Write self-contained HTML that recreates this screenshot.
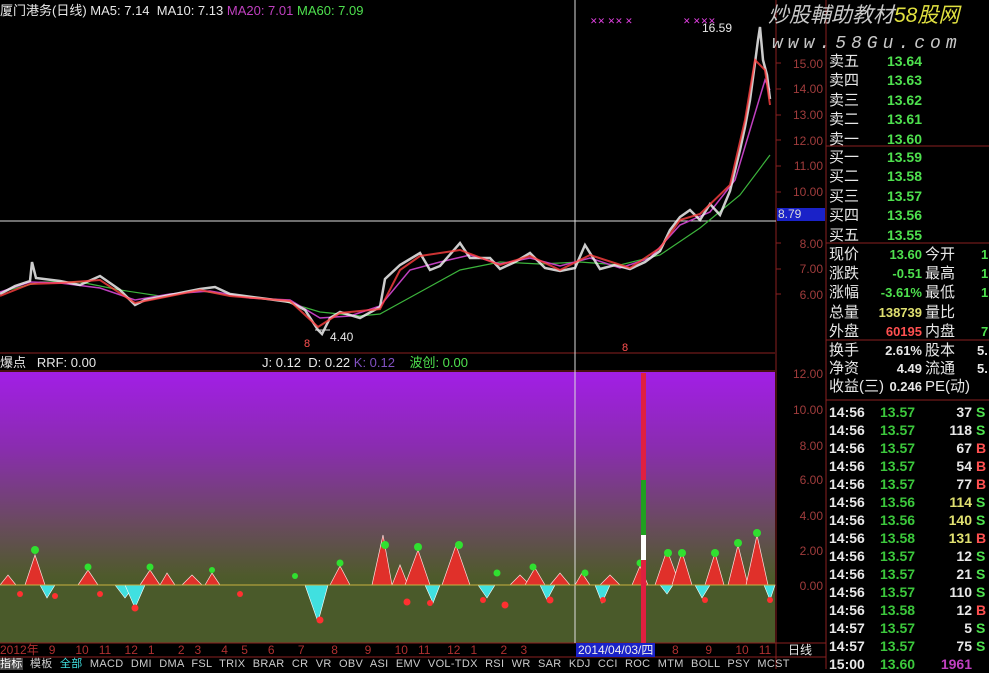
<!DOCTYPE html>
<html><head><meta charset="utf-8"><style>
body{margin:0;background:#000;width:989px;height:669px;overflow:hidden;position:relative;font-family:"Liberation Sans","Noto Sans CJK SC",sans-serif}
.t{position:absolute;white-space:nowrap;font-size:13px;line-height:15px}
.w{color:#e8e8e8}.g{color:#4ee04e}.r{color:#ff5050}.y{color:#e0e070}.m{color:#c040c0}
.ax{position:absolute;font-size:12px;color:#a03c3c;width:45px;text-align:right;left:778px}
</style></head><body>
<svg width="989" height="669" style="position:absolute;left:0;top:0">
<defs><linearGradient id="lg" x1="0" y1="0" x2="0" y2="1">
<stop offset="0" stop-color="#a21ee6"/><stop offset="0.35" stop-color="#8a2cb0"/><stop offset="0.7" stop-color="#6a4a60"/><stop offset="0.95" stop-color="#4f5a2c"/><stop offset="1" stop-color="#4a5a2a"/></linearGradient></defs>
<rect x="0" y="372" width="775" height="214" fill="url(#lg)"/>
<rect x="0" y="586" width="775" height="57" fill="#4a5a2a"/>
<line x1="0" y1="353" x2="775" y2="353" stroke="#8a2020"/>
<line x1="0" y1="371" x2="775" y2="371" stroke="#8a2020"/>
<line x1="776" y1="0" x2="776" y2="669" stroke="#8a2020"/>
<line x1="826" y1="0" x2="826" y2="669" stroke="#8a2020"/>
<line x1="826" y1="146" x2="989" y2="146" stroke="#8a2020"/>
<line x1="826" y1="243" x2="989" y2="243" stroke="#8a2020"/>
<line x1="826" y1="340" x2="989" y2="340" stroke="#8a2020"/>
<line x1="826" y1="400" x2="989" y2="400" stroke="#8a2020"/>
<line x1="0" y1="643" x2="826" y2="643" stroke="#8a2020"/>
<line x1="0" y1="657" x2="826" y2="657" stroke="#8a2020"/>
<g stroke="#8a2020"><line x1="776" y1="63" x2="781" y2="63"/><line x1="776" y1="89" x2="781" y2="89"/><line x1="776" y1="115" x2="781" y2="115"/><line x1="776" y1="140" x2="781" y2="140"/><line x1="776" y1="166" x2="781" y2="166"/><line x1="776" y1="192" x2="781" y2="192"/><line x1="776" y1="243" x2="781" y2="243"/><line x1="776" y1="269" x2="781" y2="269"/><line x1="776" y1="294" x2="781" y2="294"/></g>
<line x1="0" y1="221" x2="776" y2="221" stroke="#ddd"/>
<line x1="575" y1="0" x2="575" y2="643" stroke="#ddd"/>
<rect x="777" y="208" width="48" height="13" fill="#1a22c8"/>
<polyline fill="none" stroke="#3cb43c" stroke-width="1.2" points="0,292 40,282 80,282 120,290 160,296 200,291 240,296 280,300 320,312 360,316 380,314 420,292 460,270 500,262 540,264 580,262 620,265 660,255 700,228 740,195 770,155"/>
<polyline fill="none" stroke="#c040c0" stroke-width="1.5" points="0,292 30,282 60,283 100,288 135,300 170,294 210,291 250,298 290,300 320,318 350,316 380,306 410,270 440,262 470,255 500,264 530,258 560,266 590,258 620,268 650,258 680,225 710,212 735,180 750,130 765,80 770,90"/>
<polyline fill="none" stroke="#f0f0f0" stroke-width="2.5" opacity=".85" points="0,294 15,286 30,281 32,262 36,278 60,281 80,285 100,276 120,290 135,305 145,300 160,297 180,293 200,289 215,287 230,294 260,298 290,302 305,310 318,330 322,334 330,318 340,312 360,318 380,307 385,279 400,265 420,253 430,270 440,266 460,243 470,258 490,258 500,269 515,262 530,253 545,268 560,271 575,268 585,245 600,269 615,265 630,269 645,262 660,251 670,230 680,217 690,210 700,220 710,204 720,215 730,191 740,150 745,127 750,100 755,63 758,40 760,27 763,60 767,75 770,99"/>
<polyline fill="none" stroke="#ff4040" stroke-width="2" opacity=".8" points="0,296 30,284 60,283 100,280 135,303 160,298 200,290 230,296 290,301 318,327 340,313 380,309 400,270 420,256 460,250 500,265 530,256 560,270 590,255 630,268 660,248 680,220 700,214 730,185 745,120 755,60 765,70 770,105"/>
<g fill="#e040e0" font-size="9"><text x="590" y="24">✕✕ ✕✕ ✕</text><text x="683" y="24">✕  ✕✕✕</text></g>
<line x1="315" y1="330" x2="330" y2="330" stroke="#ddd"/>
<g fill="#e0302a" stroke="#ffdede" stroke-width=".7">
<polygon points="0,585 8,575 16,585"/><polygon points="25,585 35,555 45,585"/><polygon points="78,585 88,570 98,585"/><polygon points="140,585 150,570 160,585"/><polygon points="160,585 167,573 175,585"/><polygon points="182,585 192,575 202,585"/><polygon points="205,585 212,573 220,585"/><polygon points="330,585 340,566 350,585"/><polygon points="372,585 383,535 392,585"/><polygon points="392,585 400,565 408,585"/><polygon points="405,585 418,550 430,585"/><polygon points="442,585 456,545 470,585"/><polygon points="510,585 520,575 530,585"/><polygon points="525,585 535,568 545,585"/><polygon points="550,585 560,573 570,585"/><polygon points="575,585 582,573 590,585"/><polygon points="600,585 610,575 620,585"/><polygon points="632,585 640,566 648,585"/><polygon points="655,585 667,550 680,585"/><polygon points="672,585 682,552 692,585"/><polygon points="705,585 715,553 724,585"/><polygon points="728,585 738,545 748,585"/><polygon points="746,585 757,535 768,585"/>
</g>
<g fill="#40e0e0" stroke="#ffffff" stroke-width=".6">
<polygon points="40,585 47,598 55,585"/><polygon points="115,585 125,598 135,585"/><polygon points="125,585 135,608 145,585"/><polygon points="305,585 318,622 328,585"/><polygon points="425,585 433,603 440,585"/><polygon points="478,585 487,598 495,585"/><polygon points="540,585 547,600 555,585"/><polygon points="595,585 602,603 610,585"/><polygon points="660,585 667,594 673,585"/><polygon points="695,585 702,598 710,585"/><polygon points="764,585 770,600 775,585"/>
</g>
<line x1="0" y1="585" x2="775" y2="585" stroke="#c8b040"/>
<g fill="#30e030"><circle cx="35" cy="550" r="4"/><circle cx="88" cy="567" r="3.5"/><circle cx="150" cy="567" r="3.5"/><circle cx="212" cy="570" r="3"/><circle cx="295" cy="576" r="3"/><circle cx="340" cy="563" r="3.5"/><circle cx="385" cy="545" r="4"/><circle cx="418" cy="547" r="4"/><circle cx="459" cy="545" r="4"/><circle cx="497" cy="573" r="3.5"/><circle cx="533" cy="567" r="3.5"/><circle cx="585" cy="573" r="3.5"/><circle cx="640" cy="563" r="3.5"/><circle cx="668" cy="553" r="4"/><circle cx="682" cy="553" r="4"/><circle cx="715" cy="553" r="4"/><circle cx="738" cy="543" r="4"/><circle cx="757" cy="533" r="4"/></g>
<g fill="#ff3030"><circle cx="20" cy="594" r="3"/><circle cx="55" cy="596" r="3"/><circle cx="100" cy="594" r="3"/><circle cx="135" cy="608" r="3.5"/><circle cx="240" cy="594" r="3"/><circle cx="320" cy="620" r="3.5"/><circle cx="407" cy="602" r="3.5"/><circle cx="430" cy="603" r="3"/><circle cx="483" cy="600" r="3"/><circle cx="505" cy="605" r="3.5"/><circle cx="550" cy="600" r="3.5"/><circle cx="603" cy="600" r="3"/><circle cx="705" cy="600" r="3"/><circle cx="770" cy="600" r="3"/></g>
<rect x="641" y="373" width="5" height="270" fill="#e02040"/>
<rect x="641" y="480" width="5" height="55" fill="#20a020"/>
<rect x="641" y="535" width="5" height="25" fill="#ffffff"/>
</svg>
<div class="t w" style="left:0;top:3px">厦门港务(日线) MA5: 7.14&nbsp; MA10: 7.13 <span class="m">MA20: 7.01</span> <span class="g">MA60: 7.09</span></div>
<div class="t w" style="left:0;top:355px">爆点&nbsp;&nbsp; RRF: 0.00</div>
<div class="t w" style="left:262px;top:355px">J: 0.12&nbsp; D: 0.22 <span style="color:#8050c0">K: 0.12</span>&nbsp;&nbsp;&nbsp; <span class="g">波创: 0.00</span></div>
<div class="t w" style="left:702px;top:21px;font-size:12px">16.59</div>
<div class="t w" style="left:330px;top:330px;font-size:12px">4.40</div>
<div class="t r" style="left:304px;top:337px;font-size:11px">8</div>
<div class="t r" style="left:622px;top:341px;font-size:11px">8</div>
<div class="t" style="left:768px;top:4px;font-size:21px;line-height:24px;font-style:italic;color:#c8c8c8">炒股輔助教材<span style="color:#e0e040">58股网</span></div>
<div class="t" style="left:772px;top:33px;font-size:18px;line-height:22px;font-style:italic;color:#c8c8c8;letter-spacing:5px;font-family:'Liberation Mono',monospace">www.58Gu.com</div>
<div class="ax" style="top:57px">15.00</div><div class="ax" style="top:82px">14.00</div><div class="ax" style="top:108px">13.00</div><div class="ax" style="top:134px">12.00</div><div class="ax" style="top:159px">11.00</div><div class="ax" style="top:185px">10.00</div><div class="ax" style="top:237px">8.00</div><div class="ax" style="top:262px">7.00</div><div class="ax" style="top:288px">6.00</div>
<div class="t" style="left:778px;top:207px;font-size:12px;color:#ddd">8.79</div>
<div class="ax" style="top:367px">12.00</div><div class="ax" style="top:403px">10.00</div><div class="ax" style="top:439px">8.00</div><div class="ax" style="top:473px">6.00</div><div class="ax" style="top:509px">4.00</div><div class="ax" style="top:544px">2.00</div><div class="ax" style="top:579px">0.00</div>
<div style="position:absolute;left:829px;top:52px;font-size:15px;line-height:19.4px;color:#e8e8e8">卖五<br>卖四<br>卖三<br>卖二<br>卖一</div>
<div style="position:absolute;left:876px;top:52px;width:46px;text-align:right;font-size:14px;line-height:19.4px;color:#4ee04e;font-weight:bold">13.64<br>13.63<br>13.62<br>13.61<br>13.60</div>
<div style="position:absolute;left:829px;top:148px;font-size:15px;line-height:19.4px;color:#e8e8e8">买一<br>买二<br>买三<br>买四<br>买五</div>
<div style="position:absolute;left:876px;top:148px;width:46px;text-align:right;font-size:14px;line-height:19.4px;color:#4ee04e;font-weight:bold">13.59<br>13.58<br>13.57<br>13.56<br>13.55</div>
<div style="position:absolute;left:829px;top:245px;font-size:15px;line-height:19.2px;color:#e8e8e8">现价<br>涨跌<br>涨幅<br>总量<br>外盘</div>
<div style="position:absolute;left:858px;top:245px;width:64px;text-align:right;font-size:13px;line-height:19.2px;font-weight:bold"><span class="g">13.60</span><br><span class="g">-0.51</span><br><span class="g">-3.61%</span><br><span class="y">138739</span><br><span class="r">60195</span></div>
<div style="position:absolute;left:925px;top:245px;font-size:15px;line-height:19.2px;color:#e8e8e8">今开<br>最高<br>最低<br>量比<br>内盘</div>
<div style="position:absolute;left:981px;top:245px;font-size:13px;line-height:19.2px;font-weight:bold;color:#4ee04e">1<br>1<br>1<br><br>7</div>
<div style="position:absolute;left:829px;top:342px;font-size:15px;line-height:18px;color:#e8e8e8">换手<br>净资<br>收益(三)</div>
<div style="position:absolute;left:858px;top:342px;width:64px;text-align:right;font-size:13px;line-height:18px;font-weight:bold;color:#e8e8e8">2.61%<br>4.49<br>0.246</div>
<div style="position:absolute;left:925px;top:342px;font-size:15px;line-height:18px;color:#e8e8e8">股本<br>流通<br>PE(动)</div>
<div style="position:absolute;left:977px;top:342px;font-size:13px;line-height:18px;font-weight:bold;color:#e8e8e8">5.<br>5.</div>
<div style="position:absolute;left:829px;top:403px;font-size:14px;line-height:18px;font-weight:bold;color:#e8e8e8">14:56<br>14:56<br>14:56<br>14:56<br>14:56<br>14:56<br>14:56<br>14:56<br>14:56<br>14:56<br>14:56<br>14:56<br>14:57<br>14:57<br>15:00</div>
<div style="position:absolute;left:880px;top:403px;font-size:14px;line-height:18px;font-weight:bold;color:#3cc83c">13.57<br>13.57<br>13.57<br>13.57<br>13.57<br>13.56<br>13.56<br>13.58<br>13.57<br>13.57<br>13.57<br>13.58<br>13.57<br>13.57<br>13.60</div>
<div style="position:absolute;left:930px;top:403px;width:42px;text-align:right;font-size:14px;line-height:18px;font-weight:bold;color:#e8e8e8">37<br>118<br>67<br>54<br>77<br><span class="y">114</span><br><span class="y">140</span><br><span class="y">131</span><br>12<br>21<br>110<br>12<br>5<br>75<br><span class="m">1961</span></div>
<div style="position:absolute;left:976px;top:403px;font-size:14px;line-height:18px;font-weight:bold"><span class="g">S</span><br><span class="g">S</span><br><span class="r">B</span><br><span class="r">B</span><br><span class="r">B</span><br><span class="g">S</span><br><span class="g">S</span><br><span class="r">B</span><br><span class="g">S</span><br><span class="g">S</span><br><span class="g">S</span><br><span class="r">B</span><br><span class="g">S</span><br><span class="g">S</span></div>
<div class="t" style="left:0;top:643px;font-size:12px;line-height:14px;color:#b03030">2012年&nbsp;&nbsp;&nbsp;9&nbsp;&nbsp;&nbsp;&nbsp;&nbsp;&nbsp;10&nbsp;&nbsp;&nbsp;11&nbsp;&nbsp;&nbsp;&nbsp;12&nbsp;&nbsp;&nbsp;1&nbsp;&nbsp;&nbsp;&nbsp;&nbsp;&nbsp;&nbsp;2&nbsp;&nbsp;&nbsp;3&nbsp;&nbsp;&nbsp;&nbsp;&nbsp;&nbsp;4&nbsp;&nbsp;&nbsp;&nbsp;5&nbsp;&nbsp;&nbsp;&nbsp;&nbsp;&nbsp;6&nbsp;&nbsp;&nbsp;&nbsp;&nbsp;&nbsp;&nbsp;7&nbsp;&nbsp;&nbsp;&nbsp;&nbsp;&nbsp;&nbsp;&nbsp;8&nbsp;&nbsp;&nbsp;&nbsp;&nbsp;&nbsp;&nbsp;&nbsp;9&nbsp;&nbsp;&nbsp;&nbsp;&nbsp;&nbsp;&nbsp;10&nbsp;&nbsp;&nbsp;11&nbsp;&nbsp;&nbsp;&nbsp;&nbsp;12&nbsp;&nbsp;&nbsp;1&nbsp;&nbsp;&nbsp;&nbsp;&nbsp;&nbsp;&nbsp;2&nbsp;&nbsp;&nbsp;&nbsp;3</div>
<div class="t" style="left:576px;top:643px;font-size:12px;line-height:14px;background:#1a22c8;color:#eee;padding:0 2px">2014/04/03/四</div>
<div class="t" style="left:672px;top:643px;font-size:12px;line-height:14px;color:#b03030">8&nbsp;&nbsp;&nbsp;&nbsp;&nbsp;&nbsp;&nbsp;&nbsp;9&nbsp;&nbsp;&nbsp;&nbsp;&nbsp;&nbsp;&nbsp;10&nbsp;&nbsp;&nbsp;11</div>
<div class="t w" style="left:788px;top:643px;font-size:12px;line-height:14px">日线</div>
<div class="t" style="left:0;top:658px;font-size:11px;line-height:12px;color:#ccc;word-spacing:4px;letter-spacing:.3px"><span style="background:#444;color:#fff">指标</span> 模板 <span style="color:#40e0e0">全部</span> MACD DMI DMA FSL TRIX BRAR CR VR OBV ASI EMV VOL-TDX RSI WR SAR KDJ CCI ROC MTM BOLL PSY MCST</div>
</body></html>
